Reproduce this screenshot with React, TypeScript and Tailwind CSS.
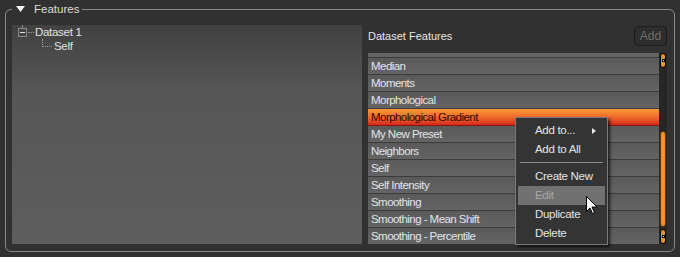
const items = [
  'Median',
  'Moments',
  'Morphological',
  'Morphological Gradient',
  'My New Preset',
  'Neighbors',
  'Self',
  'Self Intensity',
  'Smoothing',
  'Smoothing -  Mean Shift',
  'Smoothing - Percentile',
]

const selected = 'Morphological Gradient'

function ScrollButton() {
  return (
    <div className="h-[15px] mx-[1px] rounded-[3px] bg-[#f0922c] border border-black flex items-center justify-center">
      <div className="w-[3px] h-[3px] border border-black bg-white" />
    </div>
  )
}

function MenuItem({ label, active, submenu }: { label: string; active?: boolean; submenu?: boolean }) {
  return (
    <div
      className={
        'h-[19px] mx-[2px] pl-[17px] pr-[9px] flex items-center justify-between ' +
        (active ? 'bg-[#717171] text-[#a8a8a8]' : 'text-[#e4e4e4]')
      }
    >
      <span>{label}</span>
      {submenu && (
        <svg width="4" height="6" viewBox="0 0 4 6">
          <polygon points="0,0 4,3 0,6" fill="#e8e8e8" />
        </svg>
      )}
    </div>
  )
}

export default function App() {
  return (
    <div className="w-[680px] h-[257px] bg-[#313131] overflow-hidden pt-[2px] font-['Liberation_Sans',Arial,sans-serif] text-[11px] text-[#e2e2e2]">
      <fieldset className="ml-[5px] w-[670px] h-[250px] min-w-0 border border-[#8a8a8a] rounded-[6px] px-[6px] pb-[7px]">
        <legend className="h-[14px] leading-[14px] flex items-center pl-[4px] pr-[3px]">
          <svg width="9" height="6" viewBox="0 0 9 6" className="mr-[9px]">
            <polygon points="0,0 9,0 4.5,6" fill="#f2f2f2" />
          </svg>
          <span className="text-[#dcdcdc] text-[11.5px]">Features</span>
        </legend>

        <div className="flex gap-[6px] h-[219px] mt-[9px]">
          {/* tree */}
          <div className="w-[350px] bg-gradient-to-b from-[#414141] via-[#565656] via-30% to-[#5e5e5e] pl-[6px] text-[11.5px] tracking-[-0.3px]">
            <div className="flex items-start">
              <div className="flex flex-col items-center w-[9px]">
                <div className="w-px h-[3px] bg-[#8a8a8a]" />
                <div className="w-[9px] h-[9px] border border-[#8a8a8a] flex items-center justify-center">
                  <div className="w-[5px] h-px bg-[#dddddd]" />
                </div>
              </div>
              <div className="w-[6px] mt-[7px] ml-[1px] border-t border-dotted border-[#9a9a9a]" />
              <span className="leading-[13px] mt-[1px] ml-[1px]">Dataset 1</span>
            </div>
            <div className="flex items-start ml-[24px]">
              <div className="w-[10px] h-[8px] border-l border-b border-dotted border-[#9a9a9a]" />
              <span className="leading-[13px] mt-[1px] ml-[2px]">Self</span>
            </div>
          </div>

          {/* dataset features */}
          <div className="w-[299px] flex flex-col relative">
            <div className="h-[28px] flex justify-between items-start">
              <span className="mt-[4px] leading-[14px] text-[#e6e6e6]">Dataset Features</span>
              <button className="mt-[1px] w-[33px] h-[20px] rounded-[4px] border border-[#1c1c1c] bg-[#2d2d2d] text-[#6e6e6e] text-[12px] leading-[18px]">
                Add
              </button>
            </div>

            <div className="flex h-[191px]">
              <div className="w-[292px] overflow-hidden flex flex-col text-[11.5px] tracking-[-0.55px]">
                <div className="h-[5px] shrink-0 border-b border-[#3c3c3c] bg-[#636363]" />
                {items.map((item) => (
                  <div
                    key={item}
                    className={
                      'h-[17px] shrink-0 border-b pl-[3px] pt-[1px] leading-[15px] ' +
                      (item === selected
                        ? 'border-[#8a1510] bg-gradient-to-b from-[#f79a34] via-[#ef6a2a] to-[#d4241c] text-[#320600]'
                        : 'border-[#3c3c3c] bg-gradient-to-b from-[#5a5a5a] to-[#646464] text-[#e2e4e8]')
                    }
                  >
                    {item}
                  </div>
                ))}
              </div>
              <div className="w-[8px] bg-[#262626] flex flex-col">
                <ScrollButton />
                <div className="flex-1 flex flex-col">
                  <div className="h-[63px]" />
                  <div className="h-[96px] mx-[1px] rounded-full bg-gradient-to-r from-[#e8821f] via-[#f59a35] to-[#e8821f] border border-[#6a3a08]" />
                </div>
                <ScrollButton />
              </div>
            </div>

            {/* context menu */}
            <div className="absolute left-[147px] top-[92px] w-[93px] h-[128px] bg-[#343434] border border-[#7c7c7c] shadow-[2px_2px_3px_rgba(0,0,0,0.7)] pt-[3px] text-[11.5px] tracking-[-0.3px]">
              <MenuItem label="Add to..." submenu />
              <MenuItem label="Add to All" />
              <div className="h-[8px] pt-[3px] px-[4px]">
                <div className="h-px bg-[#8a8a8a]" />
              </div>
              <MenuItem label="Create New" />
              <MenuItem label="Edit" active />
              <MenuItem label="Duplicate" />
              <MenuItem label="Delete" />
            </div>

            {/* mouse cursor */}
            <svg
              width="12"
              height="19"
              viewBox="0 0 12 19"
              className="absolute left-[218px] top-[171px]"
            >
              <path
                d="M0.5 0.5 L0.5 15.5 L4 12 L6.5 17.5 L8.5 16.5 L6 11 L11 11 Z"
                fill="#ffffff"
                stroke="#000000"
                strokeWidth="1"
                strokeLinejoin="miter"
              />
            </svg>
          </div>
        </div>
      </fieldset>
    </div>
  )
}
